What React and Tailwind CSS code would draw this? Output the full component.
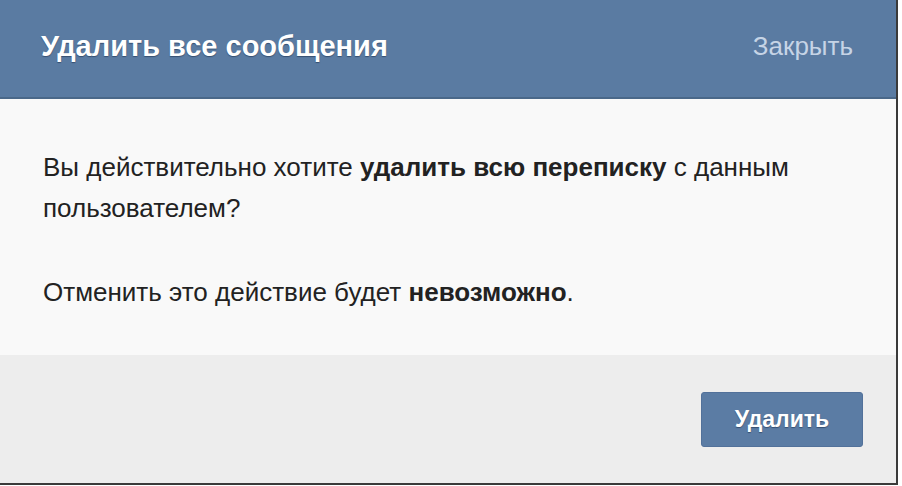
export default function App() {
  return (
    <div className="w-[902px] h-[486px] bg-white font-['Liberation_Sans',Arial,sans-serif]">
      <div className="w-[898px] h-[485px] flex flex-col border-r-2 border-b-2 border-[#3a3a3a]">
        {/* Header */}
        <div className="h-[99px] shrink-0 flex items-center justify-between pl-[41px] pr-[43px] pb-[4px] bg-[#5a7ba2] border-b-2 border-[#4a6889]">
          <h1 className="text-[29px] font-bold text-white [text-shadow:0_1px_1px_rgba(30,50,80,0.6)]">
            Удалить все сообщения
          </h1>
          <span className="text-[26px] text-[#c6d4e6]">Закрыть</span>
        </div>

        {/* Body */}
        <div className="h-[256px] shrink-0 bg-[#f9f9f9] pl-[43px] pr-[40px] pt-[48px] text-[26px] leading-[41px] text-[#222]">
          <p>
            Вы действительно хотите <b>удалить всю переписку</b> с данным пользователем?
          </p>
          <p className="mt-[43px]">
            Отменить это действие будет <b>невозможно</b>.
          </p>
        </div>

        {/* Footer */}
        <div className="flex-1 bg-[#ededed] flex justify-end items-start pt-[37px] pr-[33px]">
          <button className="w-[162px] h-[55px] rounded-[3px] bg-[#5b7ca4] border border-[#52719a] text-white text-[23px] font-bold [text-shadow:0_1px_1px_rgba(30,50,80,0.6)]">
            Удалить
          </button>
        </div>
      </div>
    </div>
  );
}
